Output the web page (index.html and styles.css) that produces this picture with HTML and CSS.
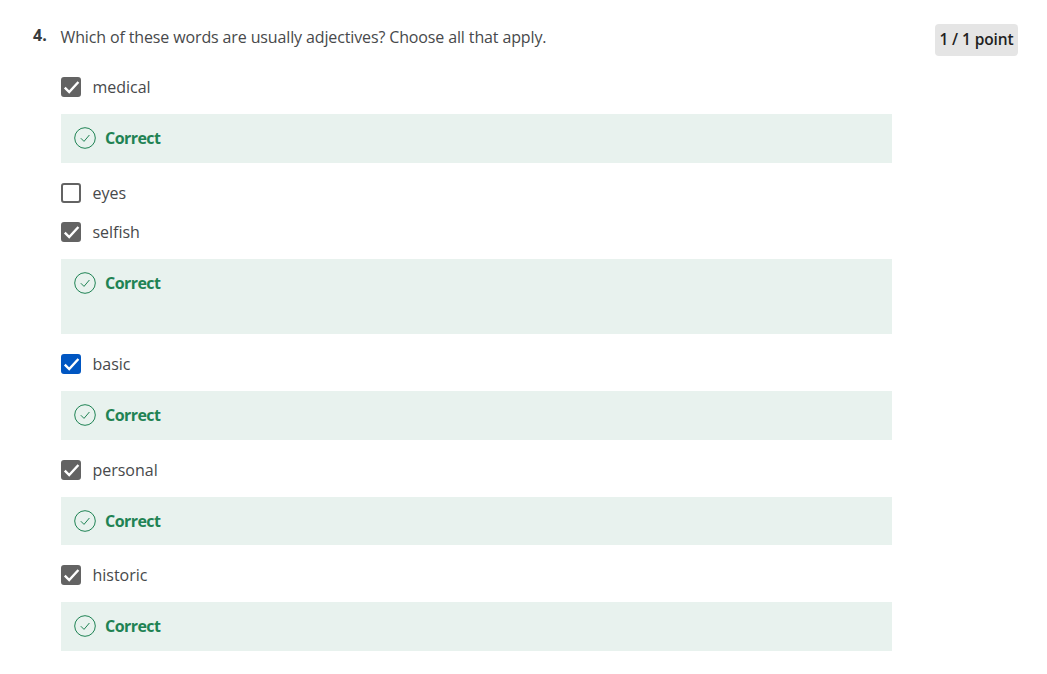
FILE: index.html
```html
<!DOCTYPE html>
<html lang="en">
<head>
<meta charset="utf-8">
<title>Question 4</title>
<link rel="stylesheet" href="styles.css">
</head>
<body>
<svg class="defs" width="0" height="0" aria-hidden="true">
  <symbol id="check-ok" viewBox="0 0 22 22">
    <circle cx="11" cy="11" r="10.3" fill="none" stroke="currentColor" stroke-width="1"/>
    <path d="M6.8 11.2l3.2 3.2 5.4-6.4" fill="none" stroke="currentColor" stroke-width="1"/>
  </symbol>
  <symbol id="tick" viewBox="0 0 20 20">
    <path d="M3.8 10.6l4.4 4.4L17.4 5" fill="none" stroke="#fff" stroke-width="2.4"/>
  </symbol>
</svg>
<main class="question">
  <header class="question-head">
    <span class="number">4.</span>
    <p class="prompt">Which of these words are usually adjectives? Choose all that apply.</p>
    <span class="score">1 / 1 point</span>
  </header>
  <div class="options">
    <div class="option"><span class="box checked"><svg class="tick"><use href="#tick"/></svg></span><span class="label">medical</span></div>
    <div class="feedback"><svg class="ok"><use href="#check-ok"/></svg><span class="correct">Correct</span></div>

    <div class="option solo"><span class="box"></span><span class="label">eyes</span></div>

    <div class="option"><span class="box checked"><svg class="tick"><use href="#tick"/></svg></span><span class="label">selfish</span></div>
    <div class="feedback tall"><svg class="ok"><use href="#check-ok"/></svg><span class="correct">Correct</span></div>

    <div class="option"><span class="box checked blue"><svg class="tick"><use href="#tick"/></svg></span><span class="label">basic</span></div>
    <div class="feedback"><svg class="ok"><use href="#check-ok"/></svg><span class="correct">Correct</span></div>

    <div class="option"><span class="box checked"><svg class="tick"><use href="#tick"/></svg></span><span class="label">personal</span></div>
    <div class="feedback"><svg class="ok"><use href="#check-ok"/></svg><span class="correct">Correct</span></div>

    <div class="option"><span class="box checked"><svg class="tick"><use href="#tick"/></svg></span><span class="label">historic</span></div>
    <div class="feedback"><svg class="ok"><use href="#check-ok"/></svg><span class="correct">Correct</span></div>
  </div>
</main>
</body>
</html>
```
FILE: styles.css
```css
* { box-sizing: border-box; }
html, body { margin: 0; padding: 0; background: #fff; }
body { font-family: "Open Sans", "Noto Sans", sans-serif; color: #373a3c; height: 674px; overflow: hidden; }
.defs { display: block; height: 0; }
.question { padding: 24px 29px 0 33px; }
.question-head { display: flex; align-items: flex-start; height: 44px; }
.number { width: 27.5px; font-size: 16px; font-weight: 700; line-height: 22px; color: #373a3c; }
.prompt { margin: 0; flex: 1; font-size: 16px; line-height: 26px; color: #47494b; letter-spacing: -0.13px; }
.score { width: 83px; height: 32px; background: #e5e5e5; border-radius: 4px; font-size: 15.5px; font-weight: 600; line-height: 31px; text-align: center; color: #1f1f1f; letter-spacing: -0.1px; }
.options { margin-left: 28px; width: 831px; }
.option { display: flex; align-items: center; height: 38px; }
.solo { margin-bottom: 1px; }
.box { width: 20px; height: 20px; border: 2px solid #636363; border-radius: 3px; background: #fff; flex: none; display: flex; }
.box.checked { background: #636363; }
.box.blue { background: #0056c2; border-color: #0056c2; }
.tick { width: 20px; height: 20px; margin: -2px; flex: none; }
.label { margin-left: 11.5px; font-size: 16px; color: #47494b; letter-spacing: -0.02px; }
.feedback { display: flex; align-items: flex-start; height: 48.75px; margin: 8px 0 11px; padding: 13px 14px 0 13px; background: #e8f2ee; }
.feedback.tall { height: 75px; }
.ok { width: 22px; height: 22px; color: #1f8354; flex: none; }
.correct { margin-left: 9px; font-size: 16px; font-weight: 700; line-height: 22px; color: #1f8354; letter-spacing: -0.55px; }
```
